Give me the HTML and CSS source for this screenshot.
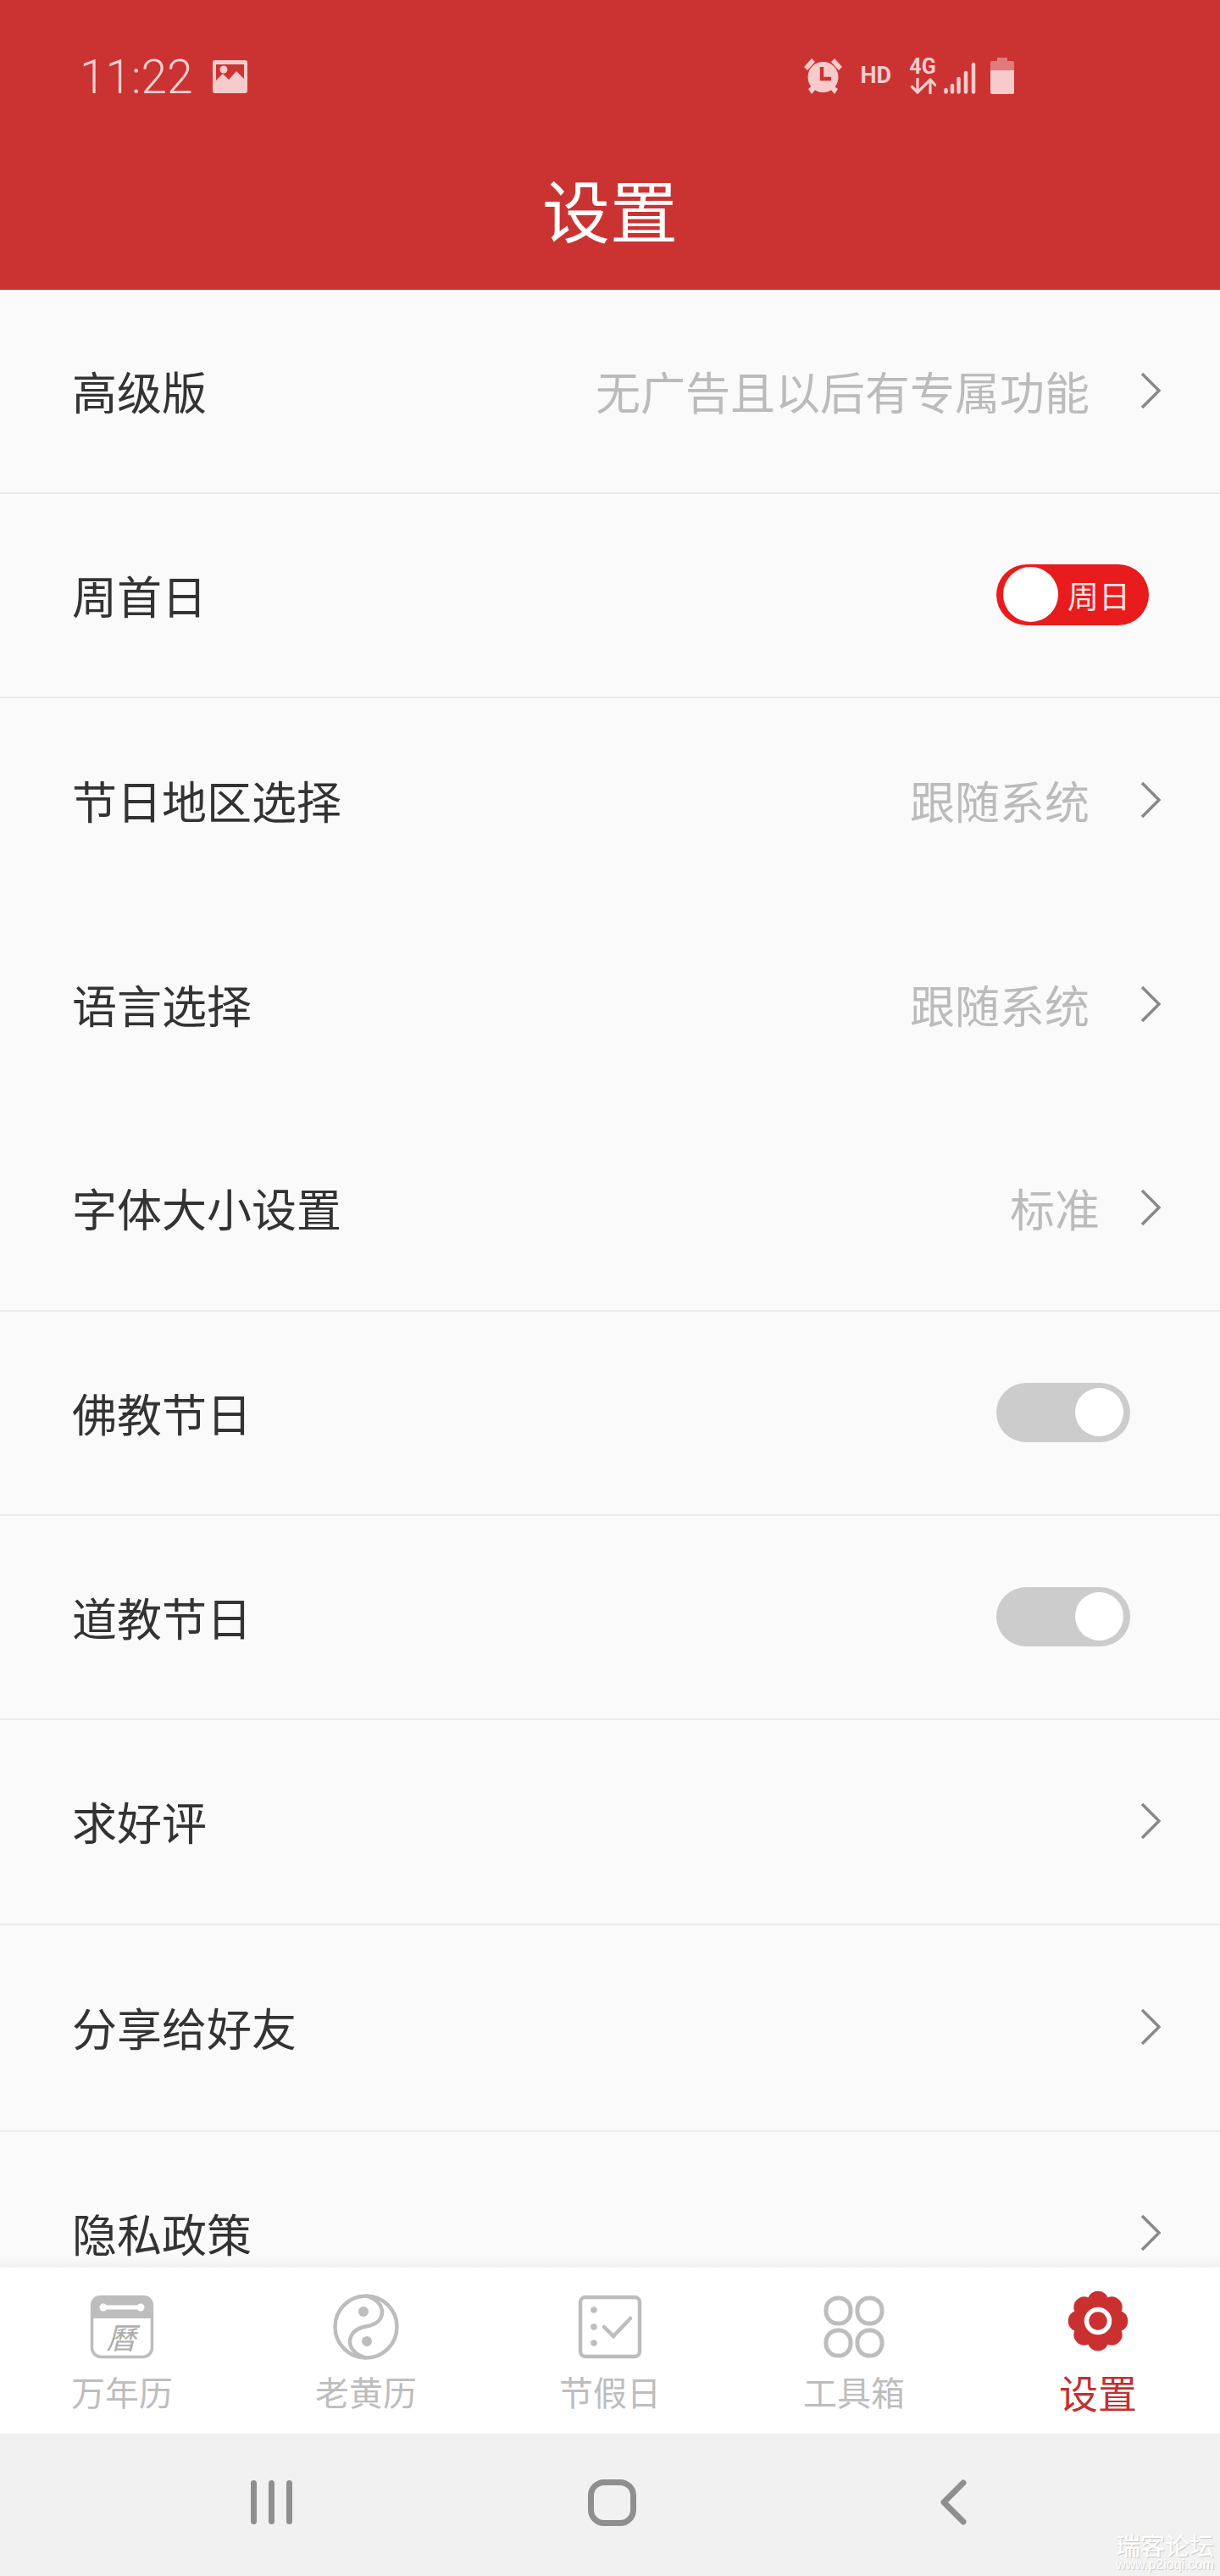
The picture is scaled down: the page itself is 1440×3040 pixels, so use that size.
FILE: index.html
```html
<!DOCTYPE html>
<html lang="zh">
<head>
<meta charset="utf-8">
<title>设置</title>
<link rel="stylesheet" href="styles.css">
</head>
<body>
<div class="page">
  <header class="header">
    <div class="status">
      <span class="time">11:22</span>
      <svg class="ic-image" viewBox="0 0 41 39"><path fill="#f6cbcb" fill-rule="evenodd" d="M3 0h35a3 3 0 0 1 3 3v33a3 3 0 0 1-3 3H3a3 3 0 0 1-3-3V3a3 3 0 0 1 3-3zM4 5v19l8-8 7 7 9-10 9 9V5z"/><circle cx="13" cy="11" r="4.500" fill="#f6cbcb"/></svg>
      <span class="status-space"></span>
      <svg class="ic-alarm" viewBox="0 0 45 43"><g fill="#f6cbcb"><circle cx="22.500" cy="23" r="18"/><path d="M0 11 9 1l4 4-9 10zM45 11 36 1l-4 4 9 10zM5 37l5-4 4 4-5 6zM40 37l-5-4-4 4 5 6z"/></g><path fill="none" stroke="#cb3333" stroke-width="4.500" d="M21 11v14h11"/></svg>
      <span class="hd">HD</span>
      <span class="net"><span class="g4">4G</span><svg class="ic-arrows" viewBox="0 0 31 19"><path fill="none" stroke="#f6cbcb" stroke-width="3.200" d="M9 0v16M1.500 9.500 9 17l7.500-7.500M24 19V3M16.500 9.500 24 2l7 7.500"/></svg></span>
      <svg class="ic-signal" viewBox="0 0 38 38"><g stroke="#f6cbcb" stroke-width="4.500" stroke-linecap="round"><path d="M2.500 33v2.500M10 28v7.500M17.500 20v15.500M26 13v22.500M35 3v32.500"/></g></svg>
      <svg class="ic-battery" viewBox="0 0 28 43"><path fill="#e07b7b" d="M8 0h12v4h6a2 2 0 0 1 2 2v10H0V6a2 2 0 0 1 2-2h6z"/><path fill="#f6cbcb" d="M0 15h28v26a2 2 0 0 1-2 2H2a2 2 0 0 1-2-2z"/></svg>
    </div>
    <h1 class="title">设置</h1>
  </header>

  <main class="list">
    <div class="row row-line"><span class="label">高级版</span><span class="value">无广告且以后有专属功能</span><svg class="chev" viewBox="0 0 24 44"><path d="M2 2l20 20L2 42"/></svg></div>
    <div class="row row-line"><span class="label">周首日</span><span class="switch-on"><span class="knob-on"></span><span class="switch-text">周日</span></span></div>
    <div class="row"><span class="label">节日地区选择</span><span class="value">跟随系统</span><svg class="chev" viewBox="0 0 24 44"><path d="M2 2l20 20L2 42"/></svg></div>
    <div class="row"><span class="label">语言选择</span><span class="value">跟随系统</span><svg class="chev" viewBox="0 0 24 44"><path d="M2 2l20 20L2 42"/></svg></div>
    <div class="row row-line"><span class="label">字体大小设置</span><span class="value value-near">标准</span><svg class="chev" viewBox="0 0 24 44"><path d="M2 2l20 20L2 42"/></svg></div>
    <div class="row row-line"><span class="label">佛教节日</span><span class="switch-off"><span class="knob-off"></span></span></div>
    <div class="row row-line"><span class="label">道教节日</span><span class="switch-off"><span class="knob-off"></span></span></div>
    <div class="row row-line"><span class="label">求好评</span><svg class="chev" viewBox="0 0 24 44"><path d="M2 2l20 20L2 42"/></svg></div>
    <div class="row row-line row-tall"><span class="label">分享给好友</span><svg class="chev" viewBox="0 0 24 44"><path d="M2 2l20 20L2 42"/></svg></div>
    <div class="row"><span class="label">隐私政策</span><svg class="chev" viewBox="0 0 24 44"><path d="M2 2l20 20L2 42"/></svg></div>
    <div class="list-fade"></div>
  </main>

  <nav class="tabs">
    <div class="tab">
      <svg class="tab-icon" viewBox="0 0 80 80"><path fill="#bdbdbd" d="M14 3h52a11 11 0 0 1 11 11v16H3V14A11 11 0 0 1 14 3z"/><rect x="4.500" y="4.500" width="71" height="71" rx="11" fill="none" stroke="#bdbdbd" stroke-width="3.500"/><path stroke="#fff" stroke-width="5" stroke-linecap="round" d="M18 17h44"/><circle cx="18" cy="17" r="4.500" fill="#fff"/><circle cx="62" cy="17" r="4.500" fill="#fff"/><text x="39" y="66" class="cal-glyph">曆</text></svg>
      <span class="tab-label">万年历</span>
    </div>
    <div class="tab">
      <svg class="tab-icon" viewBox="0 0 80 80"><g fill="none" stroke="#bdbdbd" stroke-width="4.500"><circle cx="40" cy="40" r="36.500"/><path d="M40 3.500c14 3 19 13 19 19 0 9-7 15-19 17-12 2-19 9-19 18 0 8 7 16 19 19"/></g><circle cx="37" cy="22" r="6" fill="#bdbdbd"/><circle cx="41" cy="57" r="6" fill="#bdbdbd"/></svg>
      <span class="tab-label">老黄历</span>
    </div>
    <div class="tab">
      <svg class="tab-icon" viewBox="0 0 80 80"><rect x="5" y="5" width="70" height="70" rx="6" fill="none" stroke="#bdbdbd" stroke-width="4.500"/><circle cx="21" cy="20" r="3.800" fill="#bdbdbd"/><circle cx="21" cy="40" r="3.800" fill="#bdbdbd"/><circle cx="21" cy="59" r="3.800" fill="#bdbdbd"/><path fill="none" stroke="#bdbdbd" stroke-width="4.500" stroke-linecap="round" d="M33 40l11 11 20-21"/></svg>
      <span class="tab-label">节假日</span>
    </div>
    <div class="tab">
      <svg class="tab-icon" viewBox="0 0 80 80"><g fill="none" stroke="#bdbdbd" stroke-width="5"><rect x="7" y="6" width="29" height="30" rx="14"/><rect x="44" y="6" width="29" height="30" rx="14"/><rect x="7" y="44" width="29" height="30" rx="14"/><rect x="44" y="44" width="29" height="30" rx="14"/></g></svg>
      <span class="tab-label">工具箱</span>
    </div>
    <div class="tab">
      <svg class="tab-icon tab-icon-up" viewBox="0 0 80 80"><path fill="#cb3030" d="M51.500 12.300A12.500 12.500 0 0 1 67.700 28.500A12.500 12.500 0 0 1 67.700 51.500A12.500 12.500 0 0 1 51.500 67.700A12.500 12.500 0 0 1 28.500 67.700A12.500 12.500 0 0 1 12.300 51.500A12.500 12.500 0 0 1 12.300 28.500A12.500 12.500 0 0 1 28.500 12.300A12.500 12.500 0 0 1 51.500 12.300z"/><circle cx="40" cy="40" r="13.500" fill="none" stroke="#fff" stroke-width="5.500"/></svg>
      <span class="tab-label tab-label-active">设置</span>
    </div>
  </nav>

  <footer class="navbar">
    <div class="nav-slot"><span class="recent"><i></i><i></i><i></i></span></div>
    <div class="nav-slot"><span class="home"></span></div>
    <div class="nav-slot"><svg class="back" viewBox="0 0 32 54"><path d="M28 4 5 27l23 23"/></svg></div>
  </footer>
  <div class="watermark"><span>瑞客论坛</span><small>www.p2ioqi.com</small></div>
</div>
</body>
</html>
```

FILE: styles.css
```css
* { box-sizing: border-box; }
html, body { margin: 0; padding: 0; }
body { font-family: "Noto Sans CJK SC", "Noto Sans", sans-serif; background: #fafafa; }

.page { position: relative; width: 1440px; height: 3040px; display: flex; flex-direction: column; overflow: hidden; }

.header { height: 342px; flex: none; background: #cb3333; display: flex; flex-direction: column; }
.status { height: 181px; flex: none; display: flex; align-items: flex-start; padding: 62px 243px 0 94px; }
.time { font-family: Roboto, sans-serif; font-weight: 300; font-size: 55px; line-height: 58px; color: #f8d0d0; }
.ic-image { width: 41px; height: 39px; margin: 9px 0 0 23px; }
.status-space { flex: 1; }
.ic-alarm { width: 45px; height: 43px; margin-top: 6px; }
.hd { font-family: Roboto, sans-serif; font-weight: 700; font-size: 27px; line-height: 26px; color: #f6cbcb; margin: 14px 0 0 21px; }
.net { display: flex; flex-direction: column; align-items: center; width: 32px; margin: 4px 0 0 21px; }
.g4 { font-family: Roboto, sans-serif; font-weight: 700; font-size: 25px; line-height: 26px; color: #f6cbcb; white-space: nowrap; }
.ic-arrows { width: 31px; height: 19px; }
.ic-signal { width: 38px; height: 38px; margin: 11px 0 0 9px; }
.ic-battery { width: 28px; height: 43px; margin: 6px 0 0 17px; }

.title { margin: 0; font-weight: 400; font-size: 80px; line-height: 78px; color: #fff; text-align: center; margin-top: 25px; }

.list { position: relative; flex: 1; min-height: 0; overflow: hidden; background: #fafafa; }
.row { height: 241.2px; display: flex; align-items: center; padding: 0 70px 2px 85px; }
.row-tall { height: 244px; }
.row-line { border-bottom: 2px solid #ececec; }
.label { flex: 1; font-size: 53px; line-height: 70px; color: #333; }
.value { font-size: 53px; line-height: 70px; color: #bbb; margin-right: 60px; }
.value-near { margin-right: 48px; }
.chev { width: 24px; height: 44px; fill: none; stroke: #888; stroke-width: 3.500; }
.list-fade { position: absolute; left: 0; right: 0; bottom: 0; height: 14px; background: linear-gradient(#fafafa00, #f2f2f2); }

.switch-on { width: 180px; height: 72px; border-radius: 36px; background: #e81c1c; display: flex; align-items: center; padding-left: 8px; margin-right: 14px; }
.knob-on { width: 65px; height: 65px; border-radius: 50%; background: #fff; flex: none; }
.switch-text { font-size: 37px; line-height: 72px; color: #fde4e4; margin-left: 11px; white-space: nowrap; }
.switch-off { width: 158px; height: 70px; border-radius: 35px; background: #ccc; display: flex; align-items: center; justify-content: flex-end; padding-right: 8px; margin-right: 36px; }
.knob-off { width: 57px; height: 57px; border-radius: 50%; background: #fff; }

.tabs { height: 196px; flex: none; background: #fff; display: grid; grid-template-columns: repeat(5, 288px); }
.tab { display: flex; flex-direction: column; align-items: center; padding-top: 30px; }
.tab-icon { width: 80px; height: 80px; display: block; }
.tab-icon-up { margin-top: -7px; margin-bottom: 7px; }
.tab-label { font-size: 40px; line-height: 56px; color: #bdbdbd; margin-top: 8px; }
.tab-label-active { font-size: 46px; color: #c33030; }
.cal-glyph { font-family: "Noto Sans CJK TC", "Noto Sans CJK SC", sans-serif; font-size: 35px; font-style: italic; fill: #adadad; text-anchor: middle; }

.navbar { height: 168px; flex: none; background: #f1f1f1; display: grid; grid-template-columns: repeat(3, 404px); padding: 0 0 6px 115px; }
.nav-slot { display: flex; align-items: center; justify-content: center; }
.recent { display: flex; gap: 14px; margin-left: 6px; }
.recent i { width: 7px; height: 52px; border-radius: 4px; background: #8f8f8f; }
.home { width: 57px; height: 55px; border: 7px solid #8f8f8f; border-radius: 19px; margin-left: 2px; }
.back { width: 32px; height: 54px; fill: none; stroke: #8f8f8f; stroke-width: 7; stroke-linecap: round; stroke-linejoin: round; }

.watermark { position: absolute; left: 1317px; top: 2988px; width: 116px; display: flex; flex-direction: column; align-items: center; color: #fff; text-shadow: 1px 1px 1px rgba(0, 0, 0, .18); }
.watermark span { font-size: 29px; line-height: 31px; white-space: nowrap; }
.watermark small { font-family: "Liberation Sans", sans-serif; font-size: 16px; line-height: 16px; white-space: nowrap; }
```
